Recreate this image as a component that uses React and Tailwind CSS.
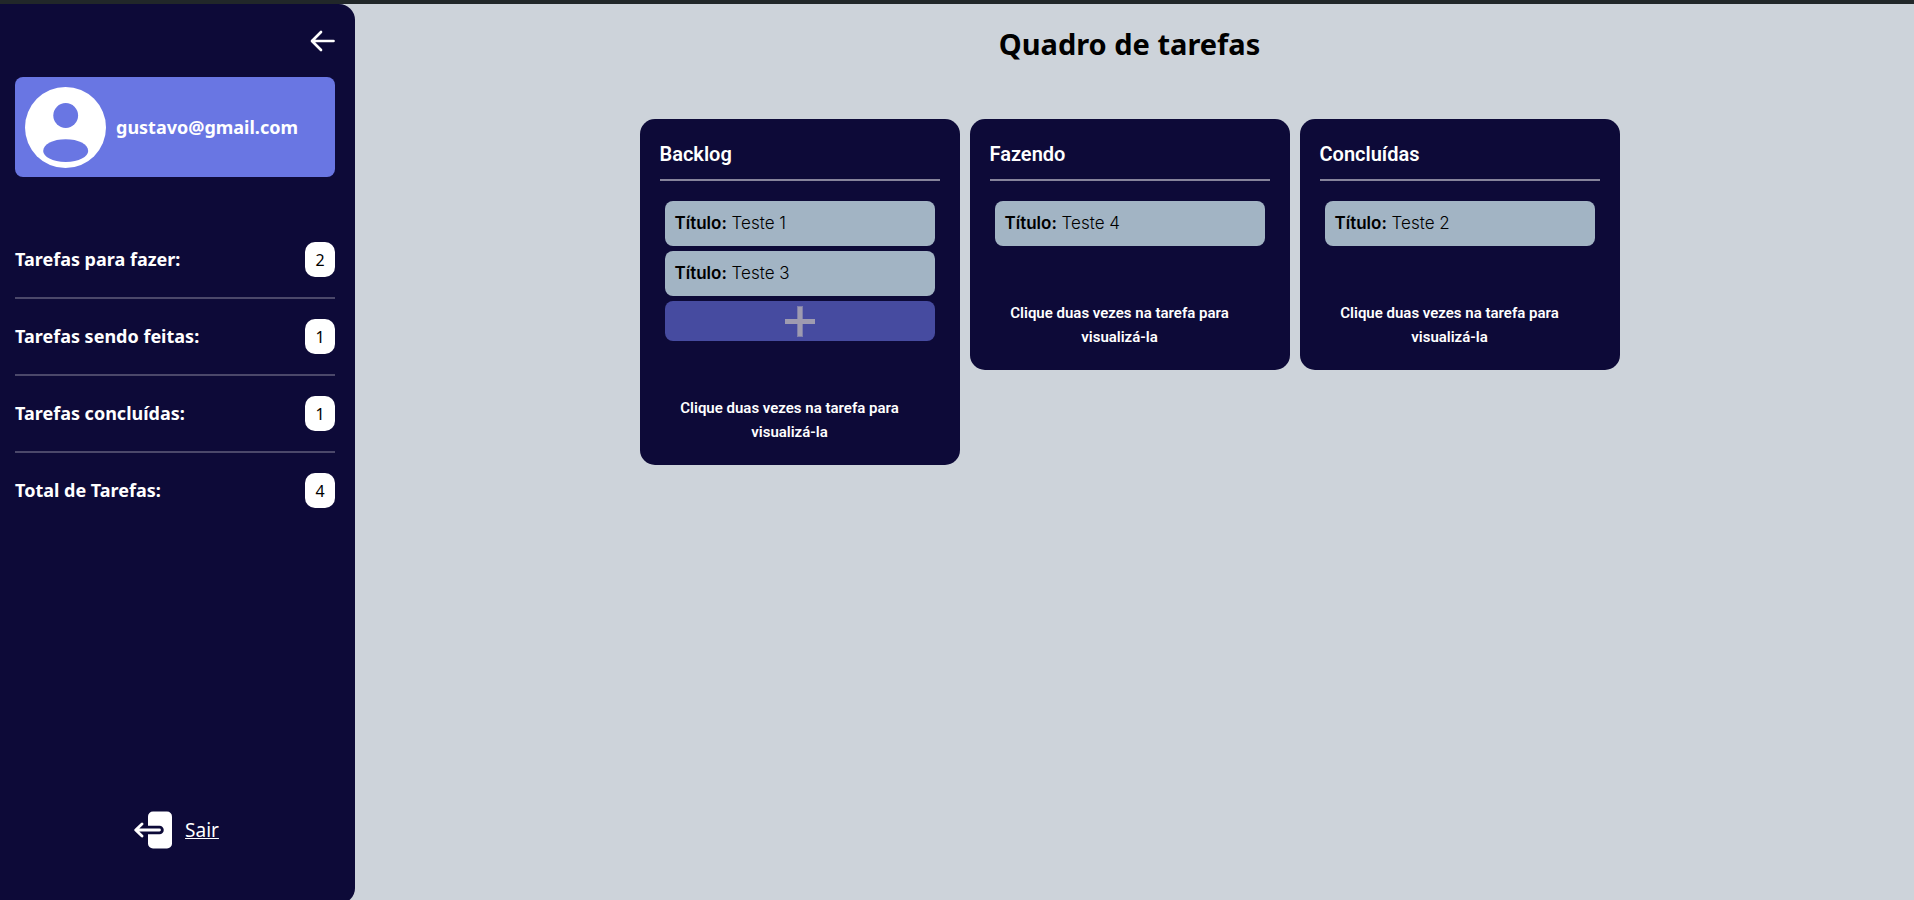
const stats = [
  { label: "Tarefas para fazer:", value: 2 },
  { label: "Tarefas sendo feitas:", value: 1 },
  { label: "Tarefas concluídas:", value: 1 },
  { label: "Total de Tarefas:", value: 4 },
];

const columns = [
  { title: "Backlog", tasks: ["Teste 1", "Teste 3"], canAdd: true },
  { title: "Fazendo", tasks: ["Teste 4"], canAdd: false },
  { title: "Concluídas", tasks: ["Teste 2"], canAdd: false },
];

function ArrowLeftIcon() {
  return (
    <svg width="25" height="22" viewBox="0 0 25 22" fill="none" stroke="currentColor" strokeWidth="2.7" strokeLinecap="round" strokeLinejoin="round" aria-hidden="true">
      <path d="M23.5 11H2.5M11 2L2 11L11 20" />
    </svg>
  );
}

function AvatarIcon() {
  return (
    <svg width="81" height="81" viewBox="0 0 81 81" className="shrink-0" aria-hidden="true">
      <circle cx="40.5" cy="40.5" r="40.5" fill="#fff" />
      <circle cx="40.7" cy="28.5" r="12.4" fill="#6976e3" />
      <path d="M18.2 64C18.2 57 28 52.2 40.7 52.2S63.2 57 63.2 64C63.2 69.500 54 75 40.700 75S18.200 69.500 18.200 64Z" fill="#6976e3" />
    </svg>
  );
}

function ExitIcon() {
  return (
    <svg width="38" height="38" viewBox="0 0 38 38" fill="none" aria-hidden="true">
      <rect x="14" y="0.500" width="24" height="37" rx="5" fill="#fff" />
      <path d="M12 19H25.500" stroke="#0d0a38" strokeWidth="8.500" strokeLinecap="round" />
      <path d="M2 19H25.500M8 13L1.700 19L8 25" stroke="#fff" strokeWidth="2.800" strokeLinecap="round" strokeLinejoin="round" />
    </svg>
  );
}

function PlusIcon() {
  return (
    <svg width="30" height="32" viewBox="0 0 30 32" aria-hidden="true">
      <path d="M12 1H18V32H12Z" fill="#7f7fac" />
      <path d="M13 2H17V31H13ZM0 14H30V19H0Z" fill="#9e9bb0" />
    </svg>
  );
}

function Sidebar() {
  return (
    <aside className="flex h-screen w-[355px] shrink-0 flex-col rounded-r-[16px] bg-[#0d0a38] pr-5 pl-[15px] text-white">
      <div className="flex h-[73px] items-center justify-end">
        <button type="button" aria-label="Recolher menu" className="cursor-pointer">
          <ArrowLeftIcon />
        </button>
      </div>
      <div className="flex h-[100px] items-center gap-[10px] rounded-lg bg-[#6976e3] px-[10px]">
        <AvatarIcon />
        <span className="text-lg font-bold">gustavo@gmail.com</span>
      </div>
      <dl className="mt-[45px]">
        {stats.map(({ label, value }) => (
          <div key={label} className="flex items-center justify-between border-b-2 border-[#4b486a] py-5 last:border-b-0">
            <dt className="text-lg leading-[35px] font-bold">{label}</dt>
            <dd className="flex h-[35px] w-[30px] items-center justify-center rounded-[10px] bg-white text-base text-black">{value}</dd>
          </div>
        ))}
      </dl>
      <a href="#sair" className="mt-auto mb-[55px] flex items-center justify-center gap-[13px] pl-[3px]">
        <ExitIcon />
        <span className="text-[19px] leading-[38px] underline">Sair</span>
      </a>
    </aside>
  );
}

function Column({ title, tasks, canAdd }) {
  return (
    <section className="w-[320px] rounded-[15px] bg-[#0d0a38] px-5 pt-5 pb-[21px] font-[Roboto,sans-serif] text-white">
      <h2 className="border-b-2 border-[#86849b] pb-[10px] text-xl leading-[30px] font-semibold">{title}</h2>
      <ul className="mx-[5px] mt-5 flex flex-col gap-[5px]">
        {tasks.map((task) => (
          <li key={task} className="rounded-lg bg-[#a2b4c4] px-[10px] font-[Inter,sans-serif] text-[17px] leading-[45px] font-light text-black">
            <strong className="font-semibold">Título:</strong> {task}
          </li>
        ))}
        {canAdd && (
          <li>
            <button type="button" aria-label="Adicionar tarefa" className="flex h-10 w-full cursor-pointer items-center justify-center rounded-lg bg-[#464ba0]">
              <PlusIcon />
            </button>
          </li>
        )}
      </ul>
      <p className="mt-[55px] mr-5 px-5 text-center text-[15px] leading-6 font-semibold">Clique duas vezes na tarefa para visualizá-la</p>
    </section>
  );
}

export default function App() {
  return (
    <div className="h-screen overflow-hidden border-t-4 border-[#212729] bg-[#cdd3da] font-['Noto_Sans',sans-serif]">
      <div className="flex">
        <Sidebar />
        <main className="flex-1 pr-[10px]">
          <h1 className="pt-5 text-center text-[29px] leading-10 font-bold text-black">Quadro de tarefas</h1>
          <div className="mt-[55px] flex items-start justify-center gap-[10px]">
            {columns.map((column) => (
              <Column key={column.title} {...column} />
            ))}
          </div>
        </main>
      </div>
    </div>
  );
}
